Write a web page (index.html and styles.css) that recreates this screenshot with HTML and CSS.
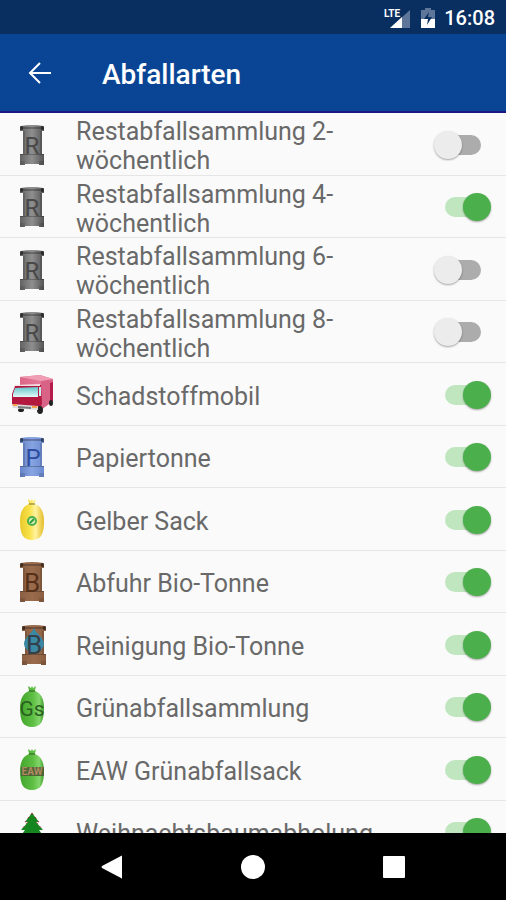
FILE: index.html
```html
<!DOCTYPE html>
<html lang="de">
<head>
  <meta charset="UTF-8" />
  <meta name="viewport" content="width=device-width, initial-scale=1.0"/>
  <title>Abfallarten</title>
  <link rel="stylesheet" href="styles.css">
</head>
<body>
  <svg class="defs" aria-hidden="true">
    <defs>
      <linearGradient id="grey"><stop offset="0" stop-color="#626262"/><stop offset="0.5" stop-color="#8f8f8f"/><stop offset="1" stop-color="#555"/></linearGradient>
      <linearGradient id="blue"><stop offset="0" stop-color="#6684c8"/><stop offset="0.5" stop-color="#87a3e2"/><stop offset="1" stop-color="#6b8bd0"/></linearGradient>
      <linearGradient id="brown"><stop offset="0" stop-color="#8b5f43"/><stop offset="0.5" stop-color="#9a6c4d"/><stop offset="1" stop-color="#8b5e41"/></linearGradient>
      <linearGradient id="yellow"><stop offset="0" stop-color="#e8c92c"/><stop offset="0.4" stop-color="#f9e24a"/><stop offset="0.65" stop-color="#fff3a0"/><stop offset="1" stop-color="#e3bb25"/></linearGradient>
      <linearGradient id="green"><stop offset="0" stop-color="#43a52c"/><stop offset="0.55" stop-color="#5fbf45"/><stop offset="0.8" stop-color="#83d66b"/><stop offset="1" stop-color="#3f9e2a"/></linearGradient>
      <linearGradient id="pink"><stop offset="0" stop-color="#dc6688"/><stop offset="1" stop-color="#e987a2"/></linearGradient>
      <linearGradient id="glass" x2="0" y2="1"><stop offset="0" stop-color="#63c4c9"/><stop offset="1" stop-color="#e4fbfa"/></linearGradient>
      <symbol id="bin" viewBox="0 0 44 44">
        <path d="M11 3q11-2 22 0l1 1v4h-2v23h2v11h-5v-1H15v1h-5V31h3V8h-3V4z"/>
        <path d="M11 4h22v2H11zM10 31h24v1H10z" fill="#000" opacity=".25"/>
        <path d="M10 3h3v4h-3zM31 3h3v4h-3z" fill="#000" opacity=".4"/>
        <path d="M13 8h2v23h-2zM30 8h2v23h-2zM10 38h5v4h-5zM29 38h5v4h-5z" fill="#000" opacity=".12"/>
      </symbol>
      <symbol id="sack" viewBox="0 0 44 44">
        <path d="M18 1l3 2 1-2 1 2 3-2-1 5c6 2 9 8 9 17 0 13-3 19-12 19s-12-6-12-19c0-9 3-15 9-17z"/>
        <path d="M19 6h6" fill="none" stroke="#000" stroke-width="1.5" opacity=".35"/>
      </symbol>
    </defs>
  </svg>

  <div class="statusbar">
    <svg class="signal" viewBox="0 0 28 24">
      <path d="M27 4v18H7z" fill="#5d7699"/>
      <path d="M19 11v11H7z" fill="#fff"/>
      <text x="1" y="11" class="lte">LTE</text>
    </svg>
    <svg class="battery" viewBox="0 0 16 22">
      <path d="M5 1h6v2h4v9H1V3h4z" fill="#5d7699"/>
      <path d="M1 12h14v9H1z" fill="#fff"/>
      <path d="M9 5l-5 7h4l-1 6 5-8H8z" fill="#092f60"/>
    </svg>
    <span class="clock">16:08</span>
  </div>

  <header class="appbar">
    <button class="back" aria-label="Zurück">
      <svg viewBox="0 0 24 24"><path d="M23 12H2M12 2L2 12l10 10"/></svg>
    </button>
    <h1>Abfallarten</h1>
  </header>

  <main class="list">
    <label class="row">
      <svg class="icon" viewBox="0 0 44 44"><use href="#bin" fill="url(#grey)"/><text x="22" y="31" class="letter">R</text></svg>
      <span class="name">Restabfallsammlung 2-wöchentlich</span>
      <input type="checkbox" class="switch">
    </label>
    <label class="row">
      <svg class="icon" viewBox="0 0 44 44"><use href="#bin" fill="url(#grey)"/><text x="22" y="31" class="letter">R</text></svg>
      <span class="name">Restabfallsammlung 4-wöchentlich</span>
      <input type="checkbox" class="switch" checked>
    </label>
    <label class="row">
      <svg class="icon" viewBox="0 0 44 44"><use href="#bin" fill="url(#grey)"/><text x="22" y="31" class="letter">R</text></svg>
      <span class="name">Restabfallsammlung 6-wöchentlich</span>
      <input type="checkbox" class="switch">
    </label>
    <label class="row">
      <svg class="icon" viewBox="0 0 44 44"><use href="#bin" fill="url(#grey)"/><text x="22" y="31" class="letter">R</text></svg>
      <span class="name">Restabfallsammlung 8-wöchentlich</span>
      <input type="checkbox" class="switch">
    </label>
    <label class="row">
      <svg class="icon" viewBox="0 0 44 44">
        <path d="M10 4l20-2 13 4v22l-13 9-20-6z" fill="url(#pink)"/>
        <path d="M31 8l12-2v22l-12 9z" fill="#d96387"/>
        <path d="M10 4l20-2 13 4-12 2z" fill="#ef9db3"/>
        <path d="M40 10l3-1v19l-3 2z" fill="#b51c4b"/>
        <path d="M5 13l26-1 1 19-3 5-27-4V21z" fill="#b3183f"/>
        <path d="M5 12l25-1v2H4z" fill="#f5dbe1"/>
        <path d="M5 15l23-1v10H3v-3z" fill="url(#glass)"/>
        <path d="M29 14h2v9h-2z" fill="#c9eeee"/>
        <ellipse cx="11" cy="37" rx="3" ry="2" fill="#222"/>
        <ellipse cx="30" cy="37" rx="3" ry="4" fill="#222"/>
        <ellipse cx="41" cy="30" rx="2" ry="3" fill="#222"/>
        <path d="M2 31l26 2v4L3 35z" fill="#dedade"/>
        <path d="M3 31h4v2H3zM22 33h5v2h-5z" fill="#f7a04a"/>
        <path d="M8 33l13 1v2L8 35z" fill="#777"/>
      </svg>
      <span class="name">Schadstoffmobil</span>
      <input type="checkbox" class="switch" checked>
    </label>
    <label class="row">
      <svg class="icon" viewBox="0 0 44 44"><use href="#bin" fill="url(#blue)"/><text x="23" y="31" class="letter paper">P</text></svg>
      <span class="name">Papiertonne</span>
      <input type="checkbox" class="switch" checked>
    </label>
    <label class="row">
      <svg class="icon" viewBox="0 0 44 44">
        <use href="#sack" fill="url(#yellow)"/>
        <circle cx="22" cy="23" r="4" fill="#d6efb5" stroke="#4caf50" stroke-width="2"/>
        <path d="M20 25l4-4" stroke="#2e9e3c" stroke-width="2"/>
      </svg>
      <span class="name">Gelber Sack</span>
      <input type="checkbox" class="switch" checked>
    </label>
    <label class="row">
      <svg class="icon" viewBox="0 0 44 44"><use href="#bin" fill="url(#brown)"/><text x="22" y="32" class="letter bio">B</text></svg>
      <span class="name">Abfuhr Bio-Tonne</span>
      <input type="checkbox" class="switch" checked>
    </label>
    <label class="row">
      <svg class="icon" viewBox="0 0 44 44">
        <use href="#bin" x="2" fill="url(#brown)"/>
        <path d="M24 5c2 6 10 9 10 16a10 8 0 0 1-20 0c0-7 8-10 10-16z" fill="#3a88a3"/>
        <text x="24" y="31" class="letter clean">B</text>
      </svg>
      <span class="name">Reinigung Bio-Tonne</span>
      <input type="checkbox" class="switch" checked>
    </label>
    <label class="row">
      <svg class="icon" viewBox="0 0 44 44"><use href="#sack" fill="url(#green)"/><text x="22" y="31" class="letter garden">Gs</text></svg>
      <span class="name">Grünabfallsammlung</span>
      <input type="checkbox" class="switch" checked>
    </label>
    <label class="row">
      <svg class="icon" viewBox="0 0 44 44">
        <use href="#sack" fill="url(#green)"/>
        <path d="M11 19h23v9H11z" fill="#4f6535"/>
        <text x="22" y="27" class="letter eaw">EAW</text>
      </svg>
      <span class="name">EAW Grünabfallsack</span>
      <input type="checkbox" class="switch" checked>
    </label>
    <label class="row">
      <svg class="icon" viewBox="0 0 44 44">
        <path d="M22 3l7 9h-3l7 8h-4l8 11H24v8h-4v-8H7l8-11h-4l7-8h-3z" fill="#14851f"/>
        <path d="M22 3l7 9h-3l7 8M22 3l-7 9h3l-7 8" fill="none" stroke="#a33c50" stroke-dasharray="2 3"/>
      </svg>
      <span class="name">Weihnachtsbaumabholung</span>
      <input type="checkbox" class="switch" checked>
    </label>
  </main>

  <nav class="navbar">
    <button aria-label="Zurück"><svg viewBox="0 0 24 24"><path d="M22 1v22q0 1-1 0L2 13q-1-1 0-2L21 1q1-1 1 0z"/></svg></button>
    <button aria-label="Startseite"><svg viewBox="0 0 24 24"><circle cx="12" cy="12" r="12"/></svg></button>
    <button aria-label="Übersicht"><svg viewBox="0 0 24 24"><rect x="1" y="1" width="22" height="22" rx="1"/></svg></button>
  </nav>
</body>
</html>
```

FILE: styles.css
```css
* { box-sizing: border-box; }

body {
  margin: 0;
  height: 100vh;
  display: flex;
  flex-direction: column;
  font-family: Roboto, sans-serif;
  background: #fafafa;
}

button {
  border: none;
  background: none;
  padding: 0;
  cursor: pointer;
}

svg { display: block; }

.defs {
  position: absolute;
  width: 0;
  height: 0;
}

.statusbar {
  flex: none;
  height: 34px;
  padding: 2px 11px 0;
  display: flex;
  align-items: center;
  justify-content: flex-end;
  background: #092f60;
  color: white;
}

.signal { width: 28px; height: 24px; margin-right: 9px; }
.battery { width: 16px; height: 22px; margin-right: 8px; }
.lte { font-size: 10px; font-weight: bold; fill: white; }
.clock { font-size: 20px; font-weight: 500; line-height: 24px; }

.appbar {
  flex: none;
  height: 79px;
  padding: 0 28px;
  display: flex;
  align-items: center;
  gap: 50px;
  background: #0a4595;
  border-bottom: 2px solid #1b1784;
  color: white;
}

.appbar h1 {
  margin: 0;
  padding-top: 4px;
  font-size: 28px;
  font-weight: 500;
  line-height: 32px;
}

.back svg {
  width: 24px;
  height: 24px;
  fill: none;
  stroke: white;
  stroke-width: 2px;
}

.list {
  flex: 1;
  min-height: 0;
  overflow: hidden;
  display: grid;
  grid-auto-rows: 63px 62px;
  align-content: start;
}

.row {
  display: flex;
  align-items: center;
  padding: 1px 14px 0 10px;
  border-bottom: 1px solid #e6e6e6;
  cursor: pointer;
}

.icon {
  flex: none;
  width: 44px;
  height: 44px;
  margin-right: 22px;
}

.letter {
  font-size: 24px;
  text-anchor: middle;
  fill: #484848;
}

.letter.paper { fill: #2c4da0; }
.letter.bio { font-size: 26px; fill: #56301a; }
.letter.clean { font-size: 26px; fill: #33404a; }
.letter.garden { font-size: 21px; fill: #2b6120; }
.letter.eaw { font-size: 10px; font-weight: bold; fill: #b08a62; }

.name {
  flex: 1;
  padding: 3px 60px 0 0;
  font-size: 25px;
  line-height: 29px;
  color: #696969;
}

.switch {
  appearance: none;
  position: relative;
  flex: none;
  width: 60px;
  height: 28px;
  margin: 0;
  cursor: pointer;
}

.switch::before {
  content: "";
  position: absolute;
  left: 12px;
  top: 4px;
  width: 36px;
  height: 20px;
  border-radius: 10px;
  background: #acacac;
}

.switch::after {
  content: "";
  position: absolute;
  left: 1px;
  top: 0;
  width: 28px;
  height: 28px;
  border-radius: 50%;
  background: #ececec;
  box-shadow: 0 1px 2px rgba(0, 0, 0, 0.35);
}

.switch:checked::before { background: #c0e6c0; }

.switch:checked::after {
  left: 30px;
  background: #4bb04b;
}

.navbar {
  flex: none;
  height: 67px;
  padding: 0 42px;
  display: flex;
  align-items: center;
  background: black;
}

.navbar button {
  flex: 1;
  display: flex;
  justify-content: center;
}

.navbar svg {
  width: 24px;
  height: 24px;
  fill: white;
}
```
